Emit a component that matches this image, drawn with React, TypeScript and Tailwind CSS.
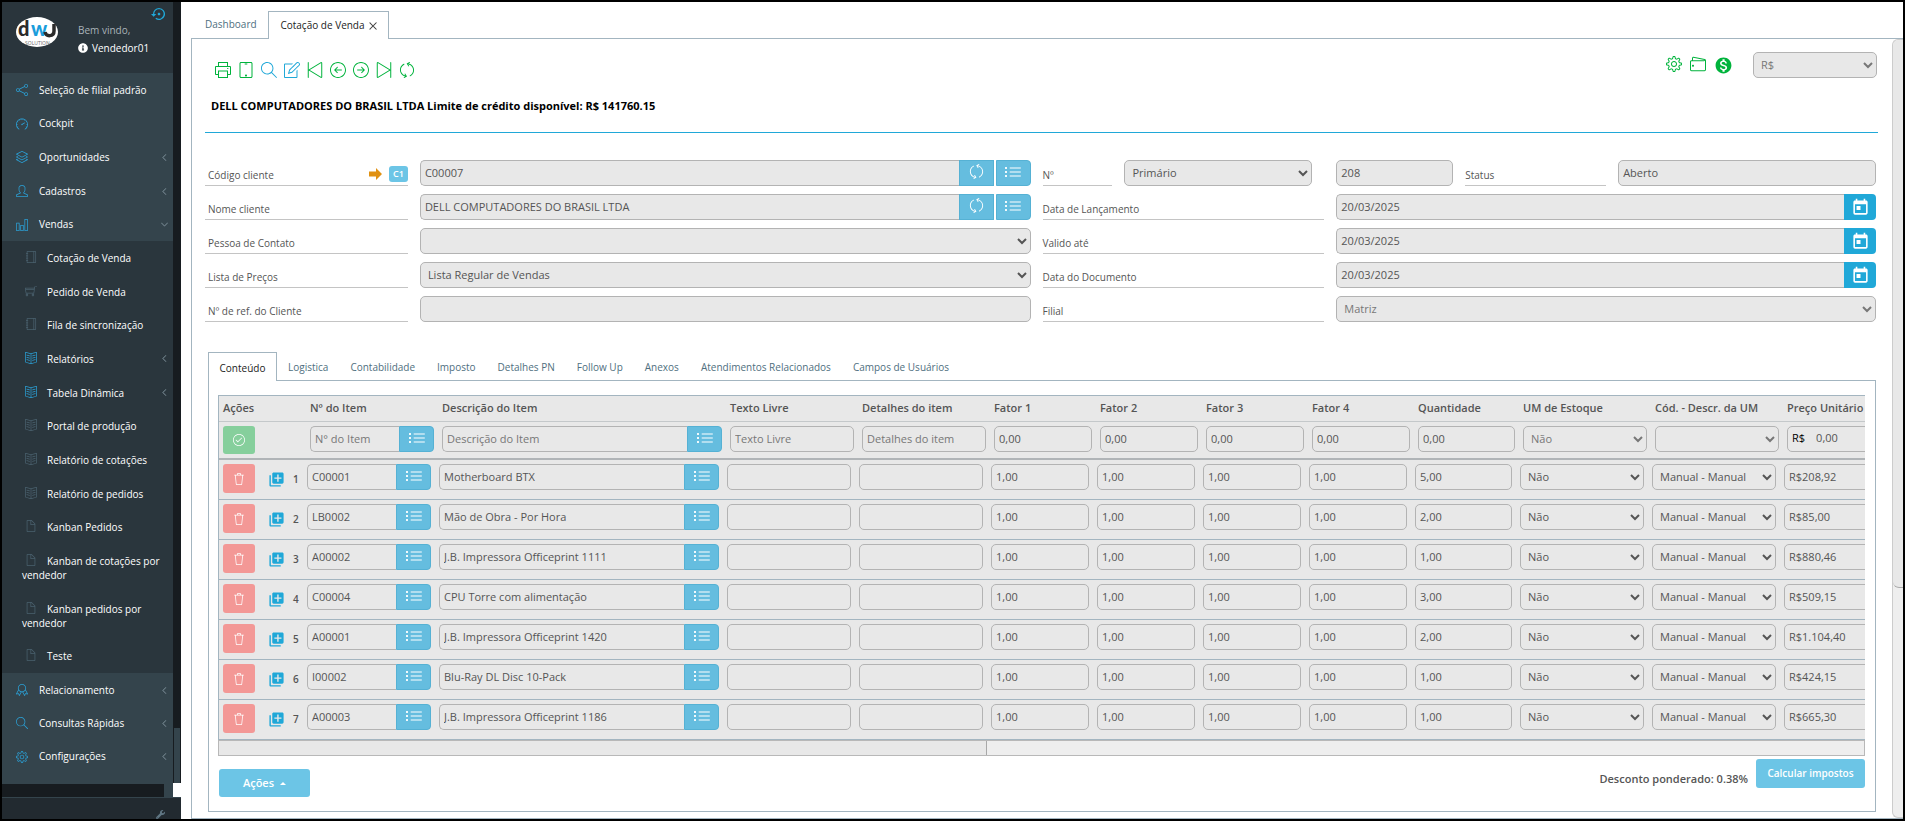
import React from "react";
import clsx from "clsx";
import type { IconType } from "react-icons";
import {
  SlArrowLeftCircle,
  SlArrowRightCircle,
  SlBadge,
  SlBookOpen,
  SlChart,
  SlCheck,
  SlControlEnd,
  SlControlStart,
  SlDoc,
  SlLayers,
  SlList,
  SlMagnifier,
  SlNote,
  SlNotebook,
  SlPrinter,
  SlRefresh,
  SlScreenTablet,
  SlSettings,
  SlShare,
  SlSpeedometer,
  SlTrash,
  SlUser,
  SlWallet,
} from "react-icons/sl";
import { TfiAngleDown, TfiAngleLeft, TfiClose, TfiShoppingCart } from "react-icons/tfi";
import { MdLibraryAdd, MdMonetizationOn, MdSettingsBackupRestore, MdToday } from "react-icons/md";
import { FaInfoCircle, FaWrench } from "react-icons/fa";

interface MenuItem {
  label: string;
  icon: IconType;
  arrow?: "left" | "down";
}

interface QuotationLine {
  code: string;
  name: string;
  quantity: string;
  price: string;
}

const topMenu: MenuItem[] = [
  { label: "Seleção de filial padrão", icon: SlShare },
  { label: "Cockpit", icon: SlSpeedometer },
  { label: "Oportunidades", icon: SlLayers, arrow: "left" },
  { label: "Cadastros", icon: SlUser, arrow: "left" },
  { label: "Vendas", icon: SlChart, arrow: "down" },
];

const salesMenu: MenuItem[] = [
  { label: "Cotação de Venda", icon: SlNotebook },
  { label: "Pedido de Venda", icon: TfiShoppingCart },
  { label: "Fila de sincronização", icon: SlNotebook },
  { label: "Relatórios", icon: SlBookOpen, arrow: "left" },
  { label: "Tabela Dinâmica", icon: SlBookOpen, arrow: "left" },
  { label: "Portal de produção", icon: SlBookOpen },
  { label: "Relatório de cotações", icon: SlBookOpen },
  { label: "Relatório de pedidos", icon: SlBookOpen },
  { label: "Kanban Pedidos", icon: SlDoc },
  { label: "Kanban de cotações por vendedor", icon: SlDoc },
  { label: "Kanban pedidos por vendedor", icon: SlDoc },
  { label: "Teste", icon: SlDoc },
];

const bottomMenu: MenuItem[] = [
  { label: "Relacionamento", icon: SlBadge, arrow: "left" },
  { label: "Consultas Rápidas", icon: SlMagnifier, arrow: "left" },
  { label: "Configurações", icon: SlSettings, arrow: "left" },
];

const toolbar: { label: string; icon: IconType; blue?: boolean }[] = [
  { label: "Imprimir", icon: SlPrinter },
  { label: "Visualizar", icon: SlScreenTablet },
  { label: "Pesquisar", icon: SlMagnifier, blue: true },
  { label: "Editar", icon: SlNote, blue: true },
  { label: "Primeiro", icon: SlControlStart },
  { label: "Anterior", icon: SlArrowLeftCircle },
  { label: "Próximo", icon: SlArrowRightCircle },
  { label: "Último", icon: SlControlEnd },
  { label: "Atualizar", icon: SlRefresh },
];

const detailTabs = [
  "Conteúdo",
  "Logistica",
  "Contabilidade",
  "Imposto",
  "Detalhes PN",
  "Follow Up",
  "Anexos",
  "Atendimentos Relacionados",
  "Campos de Usuários",
];

const factors = ["Fator 1", "Fator 2", "Fator 3", "Fator 4"];

const lines: QuotationLine[] = [
  { code: "C00001", name: "Motherboard BTX", quantity: "5,00", price: "R$208,92" },
  { code: "LB0002", name: "Mão de Obra - Por Hora", quantity: "2,00", price: "R$85,00" },
  { code: "A00002", name: "J.B. Impressora Officeprint 1111", quantity: "1,00", price: "R$880,46" },
  { code: "C00004", name: "CPU Torre com alimentação", quantity: "3,00", price: "R$509,15" },
  { code: "A00001", name: "J.B. Impressora Officeprint 1420", quantity: "2,00", price: "R$1.104,40" },
  { code: "I00002", name: "Blu-Ray DL Disc 10-Pack", quantity: "1,00", price: "R$424,15" },
  { code: "A00003", name: "J.B. Impressora Officeprint 1186", quantity: "1,00", price: "R$665,30" },
];

const field =
  "block w-full min-w-0 h-[26px] rounded-[5px] border border-[#b3b3b3] bg-[#e8e8e8] px-1 pb-[2px] text-[11px] text-[#555] placeholder:text-[#777] outline-none";
const selectField = clsx(field, "pl-[3px] pr-0");

function MenuArrow({ arrow }: { arrow?: "left" | "down" }) {
  if (!arrow) return null;
  const Icon = arrow === "left" ? TfiAngleLeft : TfiAngleDown;
  return <Icon size={7} strokeWidth={1} className="ml-auto mr-[5px] shrink-0 text-[#7d8f99]" />;
}

function MenuLink({ item }: { item: MenuItem }) {
  const Icon = item.icon;
  return (
    <a href="#" className="flex h-[33px] grow items-center pl-[14px] pt-px text-[10px] font-medium text-white">
      <Icon size={12} className="mr-[11px] shrink-0 text-[#2b9fd4]" />
      {item.label}
      <MenuArrow arrow={item.arrow} />
    </a>
  );
}

function SubMenuLink({ item }: { item: MenuItem }) {
  const Icon = item.icon;
  return (
    <a href="#" className="flex grow items-center pl-5 py-[9px] text-[10px] leading-[14px] font-medium text-white">
      <span>
        <Icon
          size={12}
          className={clsx("ml-[3px] mr-[10px] inline-block align-[-1px]", item.arrow ? "text-[#2b9fd4]" : "text-[#4a616e]")}
        />
        {item.label}
      </span>
      <MenuArrow arrow={item.arrow} />
    </a>
  );
}

function Logo() {
  return (
    <svg width="42" height="30" viewBox="0 0 42 30" aria-hidden="true">
      <ellipse cx="21" cy="15" rx="21" ry="15" fill="#fff" />
      <g fontFamily="Lato, sans-serif" fontWeight="900" fontSize="20">
        <text x="2" y="19" fill="#2b2b2b">d</text>
        <text x="15" y="19" fill="#1a9ddb">w</text>
      </g>
      <path d="M29 15c1 5 9 5 9-1V7" fill="none" stroke="#2b2b2b" strokeWidth="3.5" />
      <text x="9" y="28" fill="#666" fontFamily="Open Sans, sans-serif" fontSize="5">SOLUTION</text>
    </svg>
  );
}

function Sidebar() {
  return (
    <aside className="flex w-[179px] shrink-0 flex-col bg-[#222a30]">
      <div className="flex min-h-0 flex-1">
        <div className="flex min-w-0 flex-1 flex-col bg-[#34444c]">
          <div className="flex h-[71px] shrink-0 bg-[#2a353c] pl-[14px] pt-1">
            <div className="pt-[11px]"><Logo /></div>
            <div className="ml-5 pt-4">
              <div className="text-[10px] leading-4 text-[#a9b3b9]">Bem vindo,</div>
              <div className="mt-[2px] flex items-center gap-1 text-[10px] leading-4 text-white">
                <FaInfoCircle size={10} />
                Vendedor01
              </div>
            </div>
            <button type="button" aria-label="Restaurar" className="ml-auto mr-[6px] self-start text-[#20a8d8]">
              <MdSettingsBackupRestore size={16} />
            </button>
          </div>
          <nav className="flex flex-1 flex-col">
            <div className="flex h-[168px] flex-col">
              {topMenu.map((item) => <MenuLink key={item.label} item={item} />)}
            </div>
            <div className="flex h-[432px] flex-col bg-[#2a363d]">
              {salesMenu.map((item) => <SubMenuLink key={item.label} item={item} />)}
            </div>
            <div className="flex h-[100px] flex-col">
              {bottomMenu.map((item) => <MenuLink key={item.label} item={item} />)}
            </div>
          </nav>
          <div className="mr-[9px] h-[13px] shrink-0 bg-[#171c20]" />
        </div>
        <div className="flex w-2 flex-col bg-white">
          <div className="flex-1 bg-[#171c20]" />
          <div className="h-[55px] border-x border-[#171c20] bg-[#34444c]" />
          <div className="h-[14px]" />
        </div>
      </div>
      <div className="flex h-[22px] items-end justify-end overflow-hidden border-t border-[#34444c] pr-4">
        <FaWrench size={9} className="text-[#5f7582]" />
      </div>
    </aside>
  );
}

function FieldLabel({ id, className, children }: { id: string; className?: string; children: React.ReactNode }) {
  return (
    <label
      htmlFor={id}
      className={clsx("flex h-[26px] items-end border-b border-[#c4c4c4] pb-[3px] text-[10px] leading-[14px] text-[#555]", className)}
    >
      {children}
    </label>
  );
}

function ListButton({ label, className }: { label: string; className?: string }) {
  return (
    <button
      type="button"
      aria-label={label}
      className={clsx("flex h-[26px] w-[35px] shrink-0 justify-center rounded-r-[4px] border border-[#55b1d4] bg-[#65bddf] pt-[3px] text-white", className)}
    >
      <SlList size={16} />
    </button>
  );
}

function ClientField({ id, value }: { id: string; value: string }) {
  return (
    <div className="flex">
      <input id={id} defaultValue={value} className={clsx(field, "rounded-r-none border-r-0")} />
      <button type="button" aria-label="Atualizar" className="flex h-[26px] w-[35px] shrink-0 justify-center border border-[#55b1d4] bg-[#65bddf] pt-[3px] text-white">
        <SlRefresh size={15} />
      </button>
      <ListButton label="Listar" className="ml-[2px]" />
    </div>
  );
}

function DateField({ id }: { id: string }) {
  return (
    <div className="flex">
      <input id={id} defaultValue="20/03/2025" className={clsx(field, "rounded-r-none border-r-0")} />
      <button type="button" aria-label="Abrir calendário" className="flex h-[26px] w-8 shrink-0 items-center justify-center rounded-r-[4px] bg-[#20a8d8] text-white">
        <MdToday size={19} />
      </button>
    </div>
  );
}

function LookupInput({ label, value, placeholder }: { label: string; value?: string; placeholder?: string }) {
  return (
    <div className="flex">
      <input aria-label={label} defaultValue={value} placeholder={placeholder} className={clsx(field, "rounded-r-none border-r-0")} />
      <ListButton label={`Listar ${label}`} />
    </div>
  );
}

function HeaderForm() {
  return (
    <form className="mr-[2px] mt-[27px] grid grid-cols-[203fr_611fr_282fr_540fr] gap-x-3 gap-y-2">
      <FieldLabel id="cardCode" className="pl-[3px]">
        Código cliente
        <span className="ml-auto flex items-center gap-[7px]">
          <svg width="13" height="12" viewBox="0 0 13 12" aria-hidden="true">
            <path d="M0 3.500h7V0l6 6-6 6V8.500H0z" fill="#e09112" />
          </svg>
          <span className="rounded-[3px] bg-[#6cc5e6] px-1 text-[9px] font-semibold leading-4 text-white">C1</span>
        </span>
      </FieldLabel>
      <ClientField id="cardCode" value="C00007" />
      <div className="grid grid-cols-[70fr_188fr] gap-3 pr-3">
        <FieldLabel id="series">Nº</FieldLabel>
        <select id="series" className={selectField}><option>Primário</option></select>
      </div>
      <div className="grid grid-cols-[117fr_141fr_258fr] gap-3">
        <input aria-label="Número" defaultValue="208" className={field} />
        <FieldLabel id="status">Status</FieldLabel>
        <input id="status" defaultValue="Aberto" className={field} />
      </div>

      <FieldLabel id="cardName" className="pl-[3px]">Nome cliente</FieldLabel>
      <ClientField id="cardName" value="DELL COMPUTADORES DO BRASIL LTDA" />
      <FieldLabel id="docDate">Data de Lançamento</FieldLabel>
      <DateField id="docDate" />

      <FieldLabel id="contact" className="pl-[3px]">Pessoa de Contato</FieldLabel>
      <select id="contact" className={selectField}><option></option></select>
      <FieldLabel id="dueDate">Valido até</FieldLabel>
      <DateField id="dueDate" />

      <FieldLabel id="priceList" className="pl-[3px]">Lista de Preços</FieldLabel>
      <select id="priceList" className={selectField}><option>Lista Regular de Vendas</option></select>
      <FieldLabel id="taxDate">Data do Documento</FieldLabel>
      <DateField id="taxDate" />

      <FieldLabel id="refNo" className="pl-[3px]">Nº de ref. do Cliente</FieldLabel>
      <input id="refNo" className={field} />
      <FieldLabel id="branch">Filial</FieldLabel>
      <select id="branch" className={clsx(selectField, "text-[#777]")}><option>Matriz</option></select>
    </form>
  );
}

const filterCell = "border-b-2 border-[#b0b4b7] pl-[3px] pr-[5px] pt-1 align-top";
const lineCell = "border-b border-[#a3b5c0] pr-2 pt-1 align-top";

function ItemsTable() {
  return (
    <div className="overflow-hidden border-l border-t border-[#a3b5c0] bg-[#e8e8e8]">
      <table className="w-[1696px] table-fixed border-separate border-spacing-0 text-[11px] text-[#555]">
        <colgroup>
          <col className="w-[88px]" />
          <col className="w-[132px]" />
          <col className="w-[288px]" />
          <col className="w-[132px]" />
          <col className="w-[132px]" />
          <col className="w-[106px]" />
          <col className="w-[106px]" />
          <col className="w-[106px]" />
          <col className="w-[106px]" />
          <col className="w-[105px]" />
          <col className="w-[132px]" />
          <col className="w-[132px]" />
          <col className="w-[132px]" />
        </colgroup>
        <thead>
          <tr className="h-[26px] text-left">
            {["Ações", "Nº do Item", "Descrição do Item", "Texto Livre", "Detalhes do item", ...factors, "Quantidade", "UM de Estoque", "Cód. - Descr. da UM", "Preço Unitário"].map((title) => (
              <th key={title} className="whitespace-nowrap border-b border-[#c4c8ca] p-0 pl-[3px] font-semibold first:pl-1">{title}</th>
            ))}
          </tr>
        </thead>
        <tbody>
          <tr className="h-[38px]">
            <td className={clsx(filterCell, "first:pl-1")}>
              <button type="button" aria-label="Adicionar item" className="flex h-[28px] w-8 items-center justify-center rounded-[3px] bg-[#86cf9c] text-white">
                <SlCheck size={12} />
              </button>
            </td>
            <td className={filterCell}><LookupInput label="Nº do Item" placeholder="N° do Item" /></td>
            <td className={filterCell}><LookupInput label="Descrição do Item" placeholder="Descrição do Item" /></td>
            <td className={filterCell}><input aria-label="Texto Livre" placeholder="Texto Livre" className={field} /></td>
            <td className={filterCell}><input aria-label="Detalhes do item" placeholder="Detalhes do item" className={field} /></td>
            {[...factors, "Quantidade"].map((title) => (
              <td key={title} className={filterCell}><input aria-label={title} defaultValue="0,00" className={field} /></td>
            ))}
            <td className={filterCell}>
              <select aria-label="UM de Estoque" className={clsx(selectField, "text-[#777]")}><option>Não</option></select>
            </td>
            <td className={filterCell}>
              <select aria-label="Cód. - Descr. da UM" className={clsx(selectField, "text-[#777]")}><option></option></select>
            </td>
            <td className={filterCell}>
              <div className="flex h-[26px] items-center gap-[11px] rounded-[5px] border border-[#b3b3b3] px-1 pb-[2px]">
                <span className="text-black">R$</span>
                <input aria-label="Preço Unitário" defaultValue="0,00" className="w-full min-w-0 bg-transparent outline-none" />
              </div>
            </td>
          </tr>
          {lines.map((line, idx) => (
            <tr key={line.code} className="h-10">
              <td className={clsx(lineCell, "pl-1")}>
                <div className="flex items-center">
                  <button type="button" aria-label="Excluir item" className="flex h-[29px] w-8 items-center justify-center rounded-[3px] bg-[#f39896] text-white">
                    <SlTrash size={12} />
                  </button>
                  <button type="button" aria-label="Detalhar item" className="ml-[13px] pt-[2px] text-[#20a8d8]">
                    <MdLibraryAdd size={17} />
                  </button>
                  <span className="ml-2 pt-[2px] text-[10px] font-semibold">{idx + 1}</span>
                </div>
              </td>
              <td className={lineCell}><LookupInput label="Nº do Item" value={line.code} /></td>
              <td className={lineCell}><LookupInput label="Descrição do Item" value={line.name} /></td>
              <td className={lineCell}><input aria-label="Texto Livre" className={field} /></td>
              <td className={lineCell}><input aria-label="Detalhes do item" className={field} /></td>
              {factors.map((title) => (
                <td key={title} className={lineCell}><input aria-label={title} defaultValue="1,00" className={field} /></td>
              ))}
              <td className={lineCell}><input aria-label="Quantidade" defaultValue={line.quantity} className={field} /></td>
              <td className={lineCell}>
                <select aria-label="UM de Estoque" className={selectField}><option>Não</option></select>
              </td>
              <td className={lineCell}>
                <select aria-label="Cód. - Descr. da UM" className={selectField}><option>Manual - Manual</option></select>
              </td>
              <td className={lineCell}><input aria-label="Preço Unitário" defaultValue={line.price} className={field} /></td>
            </tr>
          ))}
        </tbody>
      </table>
    </div>
  );
}

function DetailPanel() {
  return (
    <section className="ml-[3px] mr-[2px] mt-[30px]">
      <div role="tablist" className="flex h-[29px] text-[10px] text-[#4f6f80]">
        {detailTabs.map((tab, idx) => (
          <button
            key={tab}
            type="button"
            role="tab"
            aria-selected={idx === 0}
            className={clsx(
              "whitespace-nowrap border-[#a3b5c0] pt-[3px]",
              idx === 0 ? "w-[69px] border-x border-t text-[#222]" : "border-b px-[11px]"
            )}
          >
            {tab}
          </button>
        ))}
        <div className="flex-1 border-b border-[#a3b5c0]" />
      </div>
      <div className="border-x border-b border-[#a3b5c0] pb-[14px] pl-[9px] pr-[10px] pt-[14px]">
        <ItemsTable />
        <div className="h-4 border border-[#b8b8b8] bg-[#eee]">
          <div className="h-full w-[46.7%] border-r border-[#a8a8a8] bg-[#e8e8e8]" />
        </div>
        <div className="flex items-start justify-between text-[11px]">
          <button type="button" className="ml-px mt-[13px] flex h-7 w-[91px] items-center justify-center gap-[6px] rounded-[3px] bg-[#6cc5e6] font-semibold text-white">
            Ações
            <span className="border-x-3 border-b-3 border-x-transparent border-b-white" />
          </button>
          <div className="mt-[3px] flex items-start gap-2">
            <span className="mt-3 font-semibold text-[#555]">Desconto ponderado: 0.38%</span>
            <button type="button" className="h-[29px] w-[109px] rounded-[3px] bg-[#6cc5e6] text-[10px] font-semibold text-white">
              Calcular impostos
            </button>
          </div>
        </div>
      </div>
    </section>
  );
}

export default function App() {
  return (
    <div className="flex h-screen overflow-hidden border-2 border-black bg-white font-['Open_Sans',sans-serif]">
      <Sidebar />
      <main className="flex min-w-0 flex-1 flex-col pl-[10px]">
        <div role="tablist" className="flex h-[37px] shrink-0 items-end text-[10px]">
          <button type="button" role="tab" className="h-[28px] w-[77px] border-b border-[#a3b5c0] pl-[14px] text-left text-[#4f6f80]">
            Dashboard
          </button>
          <button
            type="button"
            role="tab"
            aria-selected
            className="flex h-[28px] w-[121px] items-center justify-center gap-1 whitespace-nowrap border-x border-t border-[#a3b5c0] text-[#222]"
          >
            Cotação de Venda
            <TfiClose size={8} strokeWidth={1} />
          </button>
          <div className="h-[28px] flex-1 border-b border-[#a3b5c0]" />
        </div>
        <div className="flex min-h-0 flex-1 border-b border-l border-[#a3b5c0]">
          <div className="min-w-0 flex-1 overflow-hidden pl-[13px] pr-[14px] pt-[13px]">
            <div className="flex items-start">
              <div className="flex gap-[7px] pl-[10px] pt-[10px]">
                {toolbar.map(({ label, icon: Icon, blue }) => (
                  <button key={label} type="button" aria-label={label} className={blue ? "text-[#20a8d8]" : "text-[#00b33c]"}>
                    <Icon size={16} />
                  </button>
                ))}
              </div>
              <div className="ml-auto mr-5 flex items-start gap-2 pt-1 text-[#00b33c]">
                <button type="button" aria-label="Configurar"><SlSettings size={16} /></button>
                <button type="button" aria-label="Carteira"><SlWallet size={16} /></button>
                <button type="button" aria-label="Moeda"><MdMonetizationOn size={19} /></button>
              </div>
              <select aria-label="Moeda do documento" className={clsx(selectField, "mr-px max-w-[124px] text-[#777]")}>
                <option>R$</option>
              </select>
            </div>
            <h1 className="mt-[19px] border-b border-[#20a8d8] pb-[17px] pl-[6px] text-[11px] font-bold leading-[18px] text-black">
              DELL COMPUTADORES DO BRASIL LTDA Limite de crédito disponível: R$ 141760.15
            </h1>
            <HeaderForm />
            <DetailPanel />
          </div>
          <div className="flex w-[11px] flex-col rounded-l-[6px] border border-r-0 border-[#ccc] bg-[#eee]">
            <div className="h-[70.5%] rounded-l-[6px] border-b border-[#aaa] bg-[#e8e8e8]" />
          </div>
        </div>
      </main>
    </div>
  );
}
